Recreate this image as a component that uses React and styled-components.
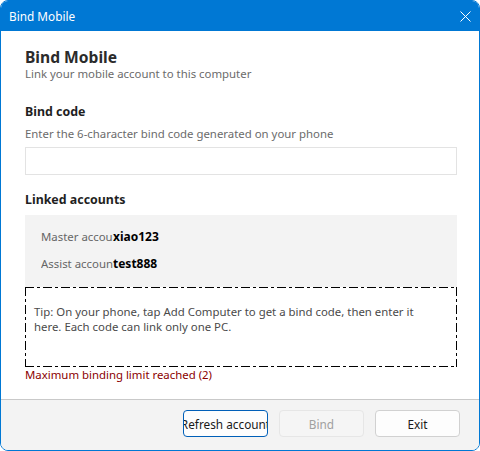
import React from "react";
import styled, { createGlobalStyle } from "styled-components";

const Global = createGlobalStyle`
  html, body { margin: 0; padding: 0; background: #ffffff; }
  body { font-family: "Segoe UI", "Noto Sans", sans-serif; }
  * { box-sizing: border-box; }
`;

const Window = styled.div`
  width: 480px;
  height: 451px;
  display: flex;
  flex-direction: column;
  border: 1px solid #0078d4;
  border-radius: 8px;
  overflow: hidden;
  background: #ffffff;
`;

const TitleBar = styled.div`
  height: 30px;
  flex: none;
  background: #0078d4;
  color: #ffffff;
  display: flex;
  align-items: center;
  justify-content: space-between;
  padding: 0 0 0 8px;
  font-size: 11.8px;
`;

const CloseButton = styled.div`
  width: 28px;
  height: 30px;
  display: flex;
  align-items: center;
  justify-content: center;
`;

const Body = styled.div`
  flex: 1;
  display: flex;
  flex-direction: column;
  padding: 17px 22px 0 24px;
`;

const Heading = styled.div`
  font-size: 15.6px;
  line-height: 18px;
  font-weight: 700;
  color: #2b2b2b;
`;

const Subtitle = styled.div`
  font-size: 11.4px;
  line-height: 16px;
  color: #6b6b6b;
`;

const SectionTitle = styled.div`
  margin-top: ${(p) => p.$gap}px;
  font-size: 12.4px;
  line-height: 18px;
  font-weight: 700;
  color: #1f1f1f;
`;

const Helper = styled.div`
  margin-top: 5px;
  font-size: 11.4px;
  line-height: 16px;
  color: #6b6b6b;
`;

const Input = styled.input`
  margin-top: 5px;
  height: 28px;
  width: 100%;
  border: 1px solid #e3e3e3;
  border-radius: 0;
  background: #ffffff;
  outline: none;
  padding: 0 6px;
  font: inherit;
  font-size: 11.4px;
`;

const AccountsPanel = styled.div`
  margin-top: 6px;
  height: 72px;
  background: #f3f3f3;
  padding: 13px 16px 0;
  display: flex;
  flex-direction: column;
  gap: 9px;
`;

const AccountRow = styled.div`
  display: flex;
  align-items: center;
  height: 18px;
  font-size: 11.4px;
  line-height: 18px;
`;

const AccountLabel = styled.span`
  width: 72px;
  flex: none;
  overflow: hidden;
  white-space: nowrap;
  color: #666666;
`;

const AccountValue = styled.span`
  font-weight: 700;
  font-size: 12px;
  color: #000000;
  white-space: nowrap;
`;

/* dash-dot outline: dash 9, gap 3, dot 3, gap 3 */
const dashH = "repeating-linear-gradient(90deg, #000 0 9px, transparent 9px 12px, #000 12px 15px, transparent 15px 18px)";
const dashV = "repeating-linear-gradient(180deg, #000 0 9px, transparent 9px 12px, #000 12px 15px, transparent 15px 18px)";

const TipBox = styled.div`
  height: 80px;
  padding: 17px 27px 0 9px;
  font-size: 11.4px;
  line-height: 15px;
  color: #4a4a4a;
  background:
    ${dashH} top left / 100% 1px no-repeat,
    ${dashH} bottom left / 100% 1px no-repeat,
    ${dashV} top left / 1px 100% no-repeat,
    ${dashV} top right / 1px 100% no-repeat;
`;

const ErrorText = styled.div`
  font-size: 11.4px;
  line-height: 16px;
  color: #8b0000;
`;

const Footer = styled.div`
  height: 51px;
  flex: none;
  border-top: 1px solid #c9c9c9;
  background: #f3f3f3;
  display: flex;
  justify-content: flex-end;
  align-items: flex-start;
  gap: 11px;
  padding: 10px 19px 0 0;
`;

const Button = styled.button`
  width: 85px;
  height: 27px;
  flex: none;
  display: block;
  overflow: hidden;
  padding: 0;
  font-family: inherit;
  font-size: 11.8px;
  border-radius: 4px;
  background: ${(p) => (p.disabled ? "#f5f5f5" : "#fdfdfd")};
  color: ${(p) => (p.disabled ? "#a0a0a0" : "#1a1a1a")};
  border: 1px solid
    ${(p) => (p.$focused ? "#005fb8" : p.disabled ? "#e6e6e6" : "#d1d1d1")};
`;

/* wider than the button so an overlong caption spills evenly past both edges */
const ButtonLabel = styled.span`
  display: block;
  margin: 0 -20px;
  text-align: center;
  white-space: nowrap;
`;

export default function App() {
  return (
    <>
      <Global />
      <Window>
        <TitleBar>
          <span>Bind Mobile</span>
          <CloseButton>
            <svg width="11" height="11" viewBox="0 0 11 11">
              <path d="M0.5 0.5 L10.5 10.5 M10.5 0.5 L0.5 10.5" stroke="#ffffff" strokeWidth="1" fill="none" />
            </svg>
          </CloseButton>
        </TitleBar>
        <Body>
          <Heading>Bind Mobile</Heading>
          <Subtitle>Link your mobile account to this computer</Subtitle>
          <SectionTitle $gap={21}>Bind code</SectionTitle>
          <Helper>Enter the 6-character bind code generated on your phone</Helper>
          <Input type="text" />
          <SectionTitle $gap={16}>Linked accounts</SectionTitle>
          <AccountsPanel>
            <AccountRow>
              <AccountLabel>Master account</AccountLabel>
              <AccountValue>xiao123</AccountValue>
            </AccountRow>
            <AccountRow>
              <AccountLabel>Assist account</AccountLabel>
              <AccountValue>test888</AccountValue>
            </AccountRow>
          </AccountsPanel>
          <TipBox>
            Tip: On your phone, tap Add Computer to get a bind code, then enter it here. Each code can link only one PC.
          </TipBox>
          <ErrorText>Maximum binding limit reached (2)</ErrorText>
        </Body>
        <Footer>
          <Button $focused>
            <ButtonLabel>Refresh account</ButtonLabel>
          </Button>
          <Button disabled>
            <ButtonLabel>Bind</ButtonLabel>
          </Button>
          <Button>
            <ButtonLabel>Exit</ButtonLabel>
          </Button>
        </Footer>
      </Window>
    </>
  );
}
